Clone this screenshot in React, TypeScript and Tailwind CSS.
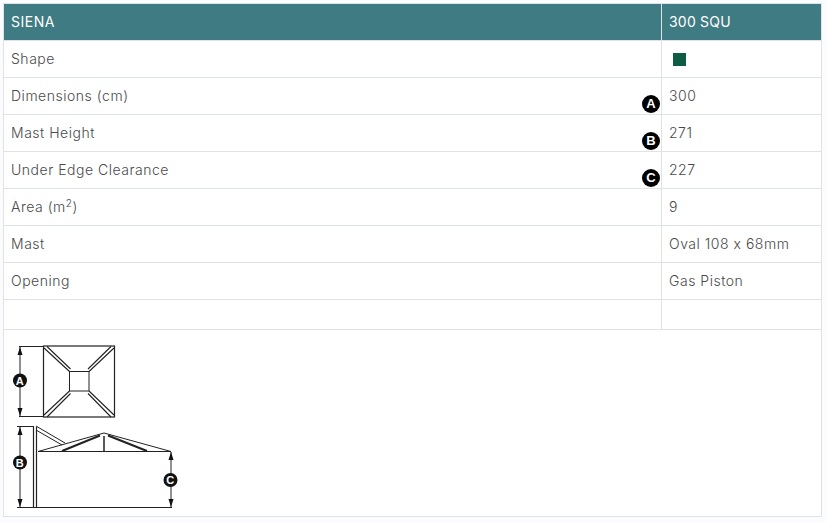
const ROWS = [
  { label: 'Dimensions (cm)', value: '300', badge: 'A' },
  { label: 'Mast Height', value: '271', badge: 'B' },
  { label: 'Under Edge Clearance', value: '227', badge: 'C' },
];

const OTHER_ROWS = [
  { label: 'Mast', value: 'Oval 108 x 68mm' },
  { label: 'Opening', value: 'Gas Piston' },
];

function Badge({ letter }: { letter: string }) {
  return (
    <span className="absolute left-[-27px] top-[10px] flex h-[18px] w-[18px] items-center justify-center rounded-full bg-black text-[13px] font-bold tracking-normal text-white font-['Liberation_Sans',sans-serif]">
      {letter}
    </span>
  );
}

function Arrow({ x, y1, y2 }: { x: number; y1: number; y2: number }) {
  return (
    <g>
      <line x1={x} y1={y1} x2={x} y2={y2} stroke="#222" strokeWidth="1" />
      <path d={`M${x - 2.5} ${y1 + 8} L${x} ${y1} L${x + 2.5} ${y1 + 8} Z`} fill="#111" />
      <path d={`M${x - 2.5} ${y2 - 8} L${x} ${y2} L${x + 2.5} ${y2 - 8} Z`} fill="#111" />
    </g>
  );
}

function DiagramBadge({ cx, cy, letter }: { cx: number; cy: number; letter: string }) {
  return (
    <g>
      <circle cx={cx} cy={cy} r="7" fill="#111" />
      <text x={cx} y={cy + 4} textAnchor="middle" fontSize="11" fontWeight="700" fill="#fff" fontFamily="Liberation Sans, sans-serif">
        {letter}
      </text>
    </g>
  );
}

// viewBox uses page coordinates so the drawing can be read against the screenshot
function Diagram() {
  return (
    <svg width="176" height="178" viewBox="8 338 176 178" className="block" fill="none">
      <g stroke="#222" strokeWidth="1">
        {/* plan view */}
        <rect x="43.5" y="346" width="71" height="71" strokeWidth="1.2" />
        <rect x="69.5" y="371.5" width="19.5" height="19.5" />
        <path d="M44 348 L69.5 371.5 M47 346.5 L70.5 369 M114 348 L89 371.5 M111 346.5 L88 369 M44 415 L69.5 391 M47 417 L70.5 393.5 M114 415 L89 391 M111 417 L88 393.5" strokeWidth="1.1" />
        <path d="M19 346.5 H43 M19 416.5 H43" />
        {/* side view */}
        <path d="M33.5 426 V507 M36.5 427 V507" strokeWidth="1.2" />
        <path d="M17 426.5 H33 M17 507.5 H172" />
        <path d="M36 426 L65 443 M36 430 L62 445" />
        <path d="M38 451.5 H171 M38 451.5 L104 433 L171 451.5" />
        <path d="M62 451 L100 435.5 M108 435.5 L147 451" strokeWidth="2" />
        <path d="M104 436 V451" strokeWidth="1.5" />
      </g>
      <Arrow x={20} y1={347} y2={416} />
      <Arrow x={20} y1={427} y2={507} />
      <Arrow x={171} y1={452} y2={507} />
      <DiagramBadge cx={20} cy={380.5} letter="A" />
      <DiagramBadge cx={20} cy={462.5} letter="B" />
      <DiagramBadge cx={170.5} cy={480} letter="C" />
    </svg>
  );
}

export default function App() {
  const cell = 'border border-[#dfe2e6] pl-[7px] pr-[7px] pb-[2px] align-middle';
  return (
    <div className="h-[522px] w-[826px] overflow-hidden bg-[#fbfcfd] pl-[3px] pt-[3px] font-['Inter',sans-serif] text-[14px] font-light tracking-[0.52px] text-[#4a4a4a]">
      <table className="w-[818px] table-fixed border-collapse bg-white">
        <colgroup>
          <col className="w-[658px]" />
          <col className="w-[160px]" />
        </colgroup>
        <tbody>
          <tr className="h-[37px] bg-[#3f7b82] font-normal text-white">
            <td className={cell}>SIENA</td>
            <td className={`${cell} tracking-[0.2px]`}>300 SQU</td>
          </tr>
          <tr className="h-[37px]">
            <td className={cell}>Shape</td>
            <td className={cell}>
              <div className="ml-[4px] mt-[2px] h-[13px] w-[13px] bg-[#0f5c45]" />
            </td>
          </tr>
          {ROWS.map((row) => (
            <tr key={row.label} className="h-[37px]">
              <td className={cell}>{row.label}</td>
              <td className={cell}>
                <div className="relative">
                  <Badge letter={row.badge} />
                  {row.value}
                </div>
              </td>
            </tr>
          ))}
          <tr className="h-[37px]">
            <td className={cell}>
              Area (m<sup className="text-[10px]">2</sup>)
            </td>
            <td className={cell}>9</td>
          </tr>
          {OTHER_ROWS.map((row) => (
            <tr key={row.label} className="h-[37px]">
              <td className={cell}>{row.label}</td>
              <td className={cell}>{row.value}</td>
            </tr>
          ))}
          <tr className="h-[30px]">
            <td className={cell} />
            <td className={cell} />
          </tr>
          <tr className="h-[187px]">
            <td colSpan={2} className="border border-[#dfe2e6] pl-[4px] align-top">
              <div className="pt-[8px]">
                <Diagram />
              </div>
            </td>
          </tr>
        </tbody>
      </table>
    </div>
  );
}
